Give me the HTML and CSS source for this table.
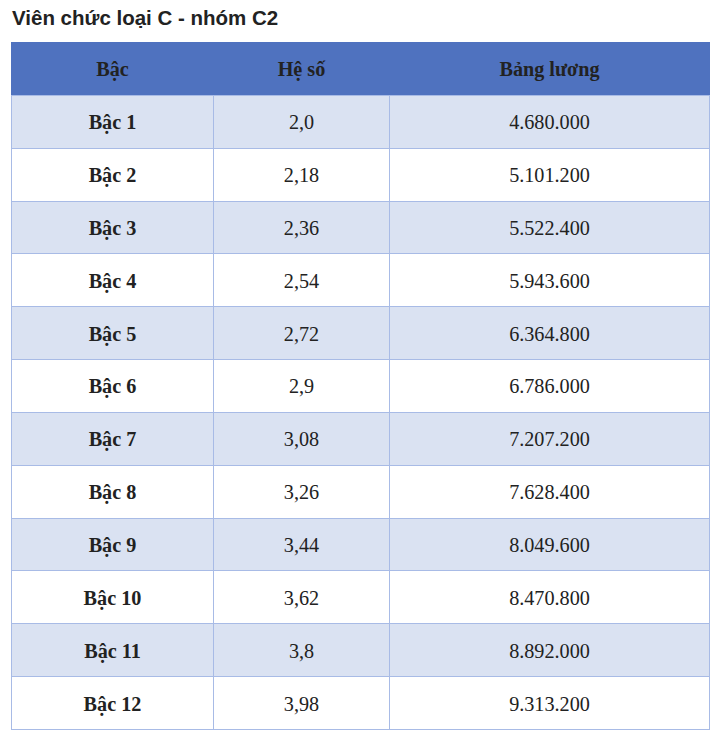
FILE: index.html
```html
<!DOCTYPE html>
<html lang="vi">
<head>
<meta charset="utf-8">
<link rel="stylesheet" href="styles.css">
</head>
<body>
<div class="page">
  <h2 class="title">Viên chức loại C - nhóm C2</h2>
  <table class="salary">
    <colgroup>
      <col class="c1"><col class="c2"><col class="c3">
    </colgroup>
    <thead>
      <tr><th>Bậc</th><th>Hệ số</th><th>Bảng lương</th></tr>
    </thead>
    <tbody>
      <tr><td class="lv">Bậc 1</td><td>2,0</td><td>4.680.000</td></tr>
      <tr><td class="lv">Bậc 2</td><td>2,18</td><td>5.101.200</td></tr>
      <tr><td class="lv">Bậc 3</td><td>2,36</td><td>5.522.400</td></tr>
      <tr><td class="lv">Bậc 4</td><td>2,54</td><td>5.943.600</td></tr>
      <tr><td class="lv">Bậc 5</td><td>2,72</td><td>6.364.800</td></tr>
      <tr><td class="lv">Bậc 6</td><td>2,9</td><td>6.786.000</td></tr>
      <tr><td class="lv">Bậc 7</td><td>3,08</td><td>7.207.200</td></tr>
      <tr><td class="lv">Bậc 8</td><td>3,26</td><td>7.628.400</td></tr>
      <tr><td class="lv">Bậc 9</td><td>3,44</td><td>8.049.600</td></tr>
      <tr><td class="lv">Bậc 10</td><td>3,62</td><td>8.470.800</td></tr>
      <tr><td class="lv">Bậc 11</td><td>3,8</td><td>8.892.000</td></tr>
      <tr><td class="lv">Bậc 12</td><td>3,98</td><td>9.313.200</td></tr>
    </tbody>
  </table>
</div>
</body>
</html>
```
FILE: styles.css
```css
html, body {
  margin: 0;
  padding: 0;
  background: #ffffff;
}
.page {
  padding: 6px 11px 0 11px;
}
.title {
  margin: 0 0 13px 1px;
  font-family: "Liberation Sans", Arial, sans-serif;
  font-weight: bold;
  font-size: 20.5px;
  line-height: 23px;
  color: #222222;
}
.salary {
  border-collapse: collapse;
  width: 698px;
  table-layout: fixed;
  font-family: "Liberation Serif", "Times New Roman", serif;
  font-size: 20.2px;
  color: #222222;
}
.c1 { width: 202px; }
.c2 { width: 176px; }
.c3 { width: 320px; }
.salary th, .salary td {
  height: 49.85px;
  padding: 2px 0 0 0;
  text-align: center;
  vertical-align: middle;
  border: 1px solid #a8bbe6;
}
.salary th {
  background: #4f72bf;
  border-color: #4f72bf;
  border-bottom-color: #a8bbe6;
  font-weight: bold;
}
.salary tbody tr:nth-child(odd) td {
  background: #dae2f2;
}
.salary td.lv {
  font-weight: bold;
}
```
